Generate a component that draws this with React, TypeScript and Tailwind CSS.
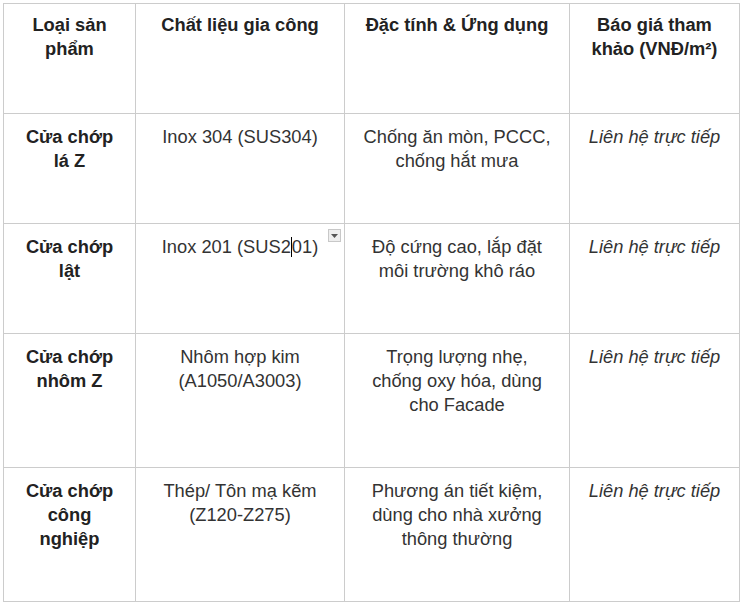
import React from "react";

const rows = [
  {
    a: ["Cửa chớp", "lá Z"],
    b: "Inox 304 (SUS304)",
    c: "Chống ăn mòn, PCCC, chống hắt mưa",
  },
  { a: ["Cửa chớp", "lật"], b: "SUS201", c: "Độ cứng cao, lắp đặt môi trường khô ráo" },
  {
    a: ["Cửa chớp", "nhôm Z"],
    b: "Nhôm hợp kim (A1050/A3003)",
    c: "Trọng lượng nhẹ, chống oxy hóa, dùng cho Facade",
  },
  {
    a: ["Cửa chớp", "công", "nghiệp"],
    b: "Thép/ Tôn mạ kẽm (Z120-Z275)",
    c: "Phương án tiết kiệm, dùng cho nhà xưởng thông thường",
  },
];

export default function App() {
  const cell =
    "border border-[#cccccc] align-top text-center pt-[11px] pb-[50px] px-[17px]";
  const head =
    "border border-[#cccccc] align-top text-center pt-[9px] pb-[52px] px-[17px]";
  return (
    <div
      className="bg-white w-[743px] h-[604px] pt-[3px] pl-[3px] text-[18.3px] leading-[24px]"
      style={{ fontFamily: '"Liberation Sans", Arial, sans-serif' }}
    >
      <table className="table-fixed border-collapse w-[736px]">
        <colgroup>
          <col className="w-[132px]" />
          <col className="w-[209px]" />
          <col className="w-[225px]" />
          <col className="w-[170px]" />
        </colgroup>
        <thead>
          <tr className="text-[#222222] font-bold">
            <th className={head + " px-[4px]"}>Loại sản phẩm</th>
            <th className={head}>Chất liệu gia công</th>
            <th className={head}>Đặc tính &amp; Ứng dụng</th>
            <th className={head + " px-[10px]"}>Báo giá tham khảo (VNĐ/m²)</th>
          </tr>
        </thead>
        <tbody className="text-[#333333]">
          {rows.map((r, i) => (
            <tr key={i}>
              <td className={cell + " font-bold text-[#222222] px-[4px]"}>
                {r.a.map((l, j) => (
                  <div key={j}>{l}</div>
                ))}
              </td>
              <td className={cell + " relative"}>
                {i === 1 ? (
                  <>
                    Inox 201 (SUS2
                    <span className="inline-block w-0 h-[20px] border-l border-black align-[-4px]" />
                    01)
                    <span className="absolute right-[3px] top-[5px] w-[13px] h-[13px] bg-[#eeeeee] border border-[#c8c8c8] flex items-center justify-center">
                      <svg width="7" height="4" viewBox="0 0 7 4">
                        <path d="M0 0 L7 0 L3.5 4 Z" fill="#555555" />
                      </svg>
                    </span>
                  </>
                ) : (
                  r.b
                )}
              </td>
              <td className={cell}>{r.c}</td>
              <td className={cell + " italic px-[10px]"}>Liên hệ trực tiếp</td>
            </tr>
          ))}
        </tbody>
      </table>
    </div>
  );
}
